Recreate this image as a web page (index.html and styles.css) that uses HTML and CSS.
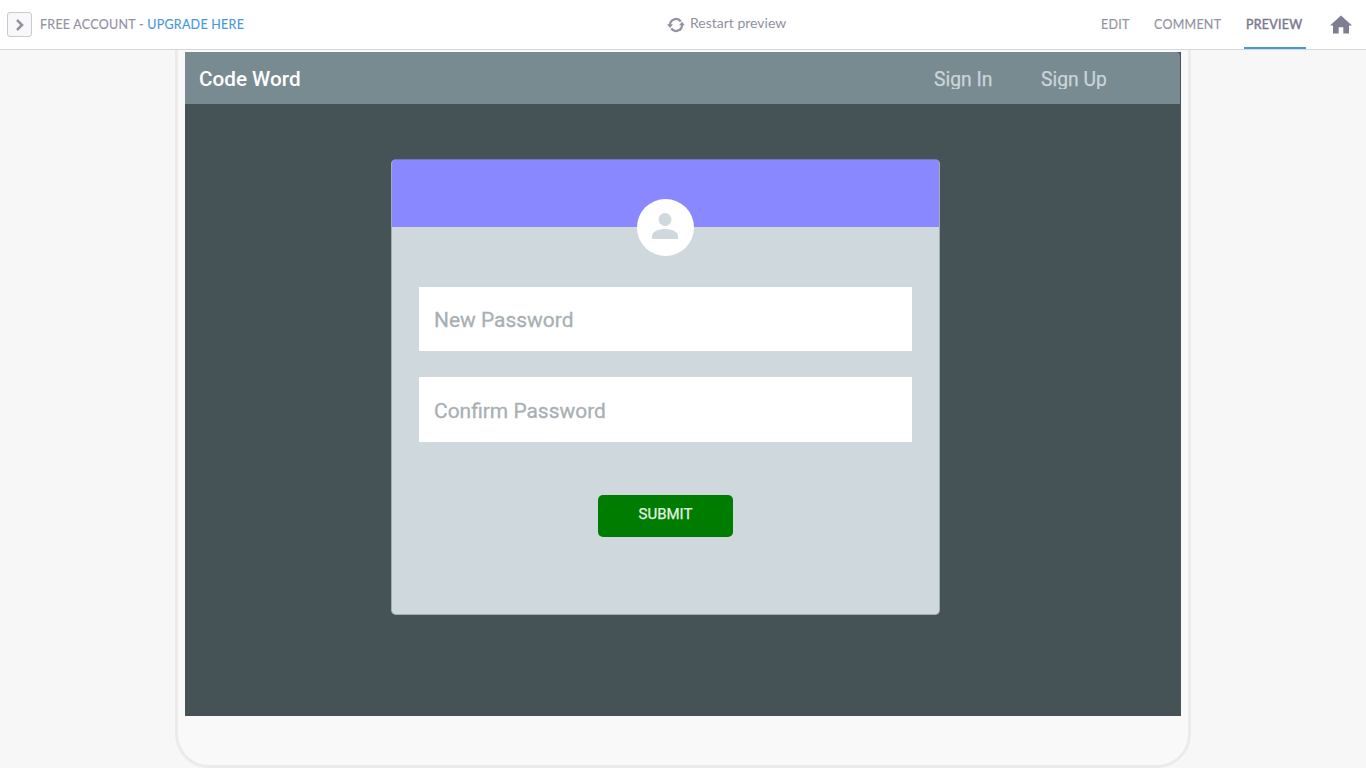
FILE: index.html
```html
<!DOCTYPE html>
<html lang="en">
<head>
<meta charset="utf-8">
<title>Preview - Code Word</title>
<link rel="stylesheet" href="styles.css">
</head>
<body>
<header class="topbar">
  <div class="account">
    <button class="toggle" aria-label="Expand"><svg width="10" height="14" viewBox="0 0 10 14"><path d="M2 2l5 5-5 5" fill="none" stroke="#92929c" stroke-width="2.5"/></svg></button>
    <span class="plan">FREE ACCOUNT - <a class="upgrade">UPGRADE HERE</a></span>
  </div>
  <div class="restart">
    <svg class="restart-icon" width="18" height="16" viewBox="0 0 18 16"><g fill="none" stroke="#9292a0" stroke-width="2.2"><path d="M3 8.500A6 6 0 0 1 13.800 4.500"/><path d="M15 7.500A6 6 0 0 1 4.200 11.500"/></g><path d="M0 7.300h6L3 11zM12 8.300H18L15 4.800z" fill="#9292a0"/></svg>
    <span class="restart-label">Restart preview</span>
  </div>
  <nav class="modes">
    <a class="mode edit">EDIT</a>
    <a class="mode comment">COMMENT</a>
    <a class="mode active">PREVIEW</a>
    <svg class="home" width="22" height="19" viewBox="0 0 22 19"><path d="M11 0.500L0 10.500h3V18.500h5.700v-6.300h4.600v6.300h5.700v-8H22z" fill="#7e7e93"/></svg>
  </nav>
</header>
<main class="stage">
  <div class="device">
    <div class="screen">
      <div class="appbar">
        <span class="brand">Code Word</span>
        <span class="link signin">Sign In</span>
        <span class="link signup">Sign Up</span>
      </div>
      <form class="card">
        <div class="card-head">
          <div class="avatar"><svg width="26" height="26" viewBox="0 0 26 26"><circle cx="13" cy="6.500" r="6.500" fill="#cfd8dc"/><path d="M0 26v-3c0-4.500 7-7 13-7s13 2.500 13 7v3z" fill="#cfd8dc"/></svg></div>
        </div>
        <div class="field">New Password</div>
        <div class="field confirm">Confirm Password</div>
        <div class="submit"><span class="submit-label">SUBMIT</span></div>
      </form>
    </div>
  </div>
</main>
</body>
</html>
```
FILE: styles.css
```css
* { box-sizing: border-box; }
body { margin: 0; height: 768px; overflow: hidden; background: #f7f7f7; font-family: Lato, sans-serif; }
.topbar { display: grid; grid-template-columns: 667px 400px 299px; height: 50px; background: #fff; border-bottom: 1px solid #d5d8d8; color: #9292a0; }
.account { display: flex; align-items: center; padding-left: 7px; gap: 8px; }
.toggle { display: flex; align-items: center; justify-content: center; width: 25px; height: 25px; padding: 0; border: 1px solid #cacace; border-radius: 3px; background: #f8f8fa; }
.plan { font-size: 12.500px; line-height: 16px; letter-spacing: 0.25px; white-space: nowrap; -webkit-text-stroke: 0.15px; }
.upgrade { color: #4797e0; }
.restart { display: flex; padding-top: 14px; gap: 5px; }
.restart-icon { margin-top: 3px; }
.restart-label { font-size: 14px; line-height: 17px; }
.modes { display: flex; padding-left: 34px; }
.mode { height: 49px; padding-top: 17px; font-size: 12.500px; line-height: 16px; letter-spacing: 0.25px; -webkit-text-stroke: 0.15px; white-space: nowrap; }
.edit { width: 53px; }
.comment { width: 90px; }
.active { width: 62px; padding-left: 2px; color: #77778d; -webkit-text-stroke: 0.4px; border-bottom: 2px solid #479bd2; }
.home { margin: 15px 0 0 24px; }
.stage { display: flex; height: 718px; padding-left: 175px; overflow: hidden; }
.device { width: 1016px; height: 718px; padding: 2px 6px 0 7px; border: 3px solid #ebebeb; border-top: 0; border-radius: 0 0 34px 34px; background: #f9f9f9; }
.screen { width: 996px; height: 664px; background: #455357; font-family: Roboto, sans-serif; overflow: hidden; }
.appbar { display: flex; width: 995px; height: 52px; padding: 14px 0 0 14px; background: #788b90; border-radius: 0 4px 0 0; }
.brand { width: 735px; font-size: 20.700px; font-weight: 500; line-height: 27px; color: #fff; }
.link { height: 27px; font-size: 19.300px; line-height: 27px; color: #cbd5d9; -webkit-text-stroke: 0.25px; clip-path: inset(0 0 4px 0); }
.signin { width: 107px; }
.card { width: 549px; height: 456px; margin: 55px 0 0 206px; border: 1px solid #a1adb0; border-top-color: #7773bd; border-radius: 5px; background: #cfd8dc; overflow: hidden; }
.card-head { display: flex; justify-content: center; height: 67px; margin-bottom: 60px; padding-right: 1px; background: #8a88ff; }
.avatar { display: flex; flex: none; align-items: center; justify-content: center; width: 57px; height: 57px; margin-top: 39px; padding-bottom: 3px; border-radius: 50%; background: #fff; }
.field { width: 493px; height: 64px; margin: 0 0 26px 27px; padding: 20px 0 0 15px; background: #fff; font-size: 20.950px; line-height: 27px; color: #a8b0b3; -webkit-text-stroke: 0.3px; }
.confirm { height: 65px; padding-top: 21px; }
.submit { display: flex; justify-content: center; width: 135px; height: 42px; margin: 53px auto 0; border-radius: 5px; background: #007c00; }
.submit-label { padding-top: 10px; font-size: 15px; line-height: 18px; color: #e3f5e3; -webkit-text-stroke: 0.25px; }
```
